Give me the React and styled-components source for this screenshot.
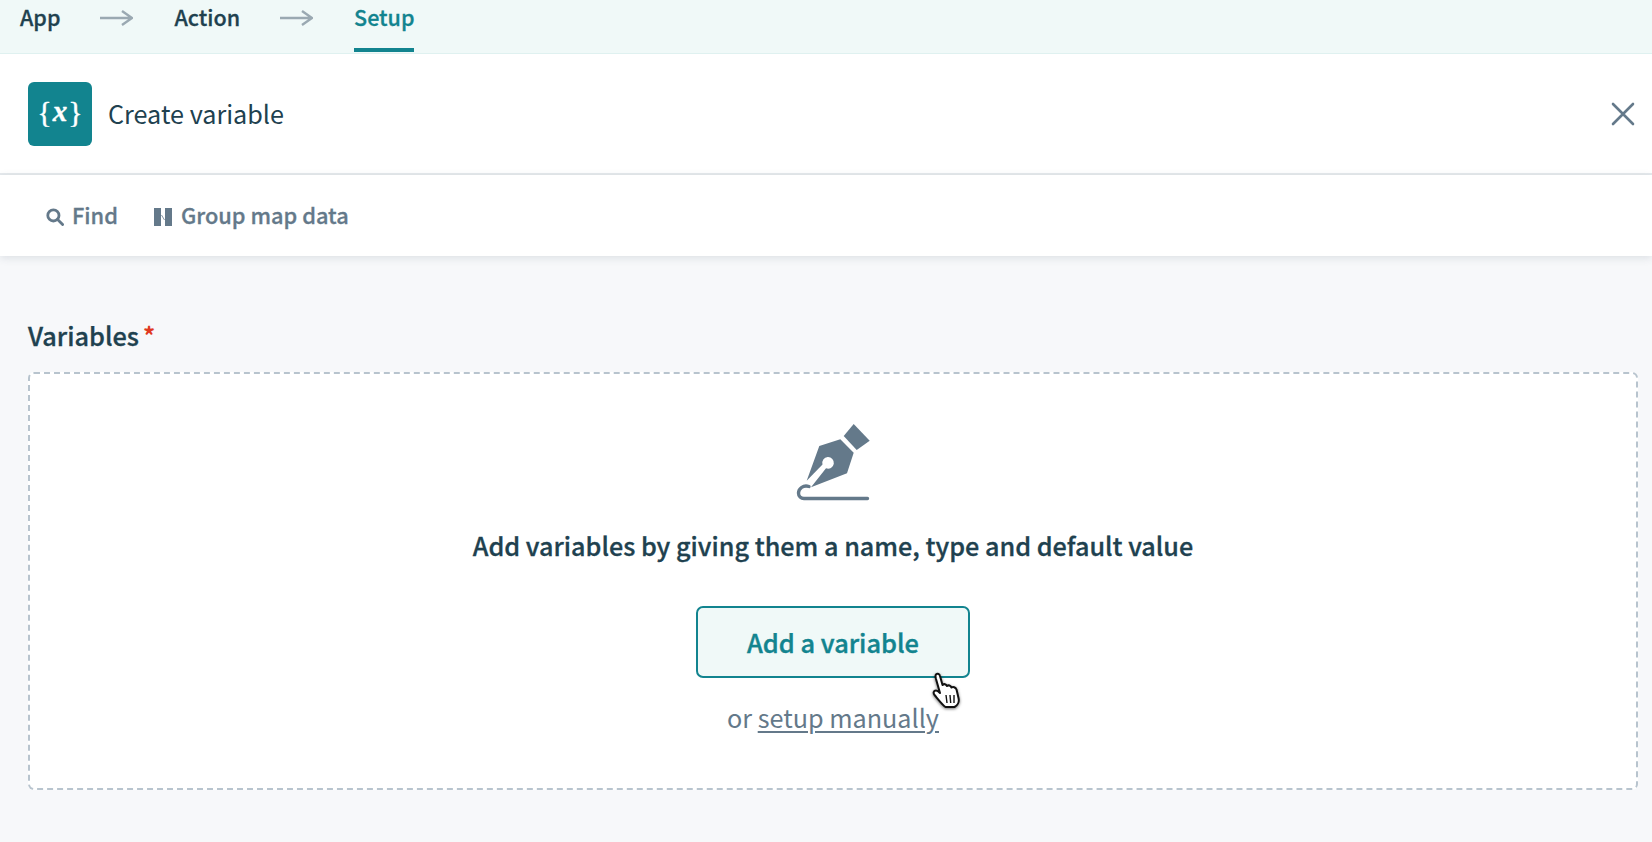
import React from "react";
import styled, { createGlobalStyle } from "styled-components";

const Global = createGlobalStyle`
  html, body { margin: 0; padding: 0; height: 842px; overflow: hidden; background: #f7f8fa; }
  body { font-family: "Noto Sans CJK SC", "Noto Sans", sans-serif; color: #20414f; }
  * { box-sizing: border-box; }
`;

const Page = styled.div`
  width: 1652px;
  height: 842px;
  display: flex;
  flex-direction: column;
  overflow: hidden;
`;

const StepBar = styled.nav`
  height: 54px;
  flex: none;
  background: #f0f9f8;
  border-bottom: 1px solid #dff1f0;
  display: flex;
  align-items: flex-start;
  padding-left: 20px;
`;

const Step = styled.div`
  height: 52px;
  font-size: 21.5px;
  line-height: 34px;
  font-weight: 500;
  -webkit-text-stroke: 0.3px currentColor;
  color: ${(p) => (p.$active ? "#12848f" : "#20414f")};
  border-bottom: 4px solid ${(p) => (p.$active ? "#12848f" : "transparent")};
`;

const StepArrow = styled.svg`
  width: 33px;
  height: 16px;
  margin: 10px 41px 0 40px;
  flex: none;
  fill: none;
  stroke: #9aa9b2;
  stroke-width: 2.4;
`;

const Header = styled.header`
  height: 121px;
  flex: none;
  background: #fff;
  border-bottom: 2px solid #e6eaed;
  display: flex;
  align-items: center;
  padding: 0 17px 0 28px;
`;

const AppIcon = styled.div`
  width: 64px;
  height: 64px;
  border-radius: 6px;
  background: #12848f;
  color: #fff;
  display: flex;
  align-items: center;
  justify-content: center;
  font-family: "Liberation Serif", serif;
  font-size: 30px;
  font-weight: 400;
  -webkit-text-stroke: 0.4px currentColor;
  line-height: 1;
  padding-bottom: 4px;
  flex: none;
`;

const VarX = styled.i`
  font-weight: 700;
  font-size: 29px;
  margin: 0 1px;
`;

const Title = styled.h1`
  margin: 0 0 2px 16px;
  font-size: 25.2px;
  line-height: 36px;
  font-weight: 400;
  flex: 1;
  color: #20414f;
`;

const CloseIcon = styled.svg`
  width: 24px;
  height: 24px;
  fill: none;
  stroke: #64798a;
  stroke-width: 2.6;
  stroke-linecap: round;
`;

const Toolbar = styled.div`
  height: 81px;
  flex: none;
  background: #fff;
  box-shadow: 0 2px 8px rgba(60, 80, 100, 0.14);
  display: flex;
  align-items: center;
  padding: 0 0 2px 46px;
  gap: 36px;
  position: relative;
`;

const ToolButton = styled.div`
  display: flex;
  align-items: center;
  gap: ${(p) => p.$gap}px;
  font-size: 21.8px;
  line-height: 30px;
  font-weight: 500;
  -webkit-text-stroke: 0.3px currentColor;
  color: #64798a;
`;

const ToolIcon = styled.svg`
  width: 18px;
  height: 18px;
  flex: none;
  margin-top: 4px;
`;

const Body = styled.main`
  flex: 1;
  background: #f7f8fa;
  padding: 61px 14px 0 28px;
`;

const FieldLabel = styled.div`
  font-size: 25.3px;
  line-height: 36px;
  font-weight: 500;
  -webkit-text-stroke: 0.3px currentColor;
  color: #20414f;
  margin-bottom: 19px;
`;

const Star = styled.span`
  color: #e0391f;
  font-size: 24px;
  font-weight: 700;
  margin-left: 4px;
  vertical-align: 1px;
  -webkit-text-stroke: 0;
`;

const DropBox = styled.section`
  height: 418px;
  background: #fff;
  border: 2px dashed #b8c4ce;
  border-radius: 6px;
  display: flex;
  flex-direction: column;
  align-items: center;
  padding-top: 46px;
`;

const Pen = styled.svg`
  width: 80px;
  height: 85px;
  flex: none;
`;

const Prompt = styled.div`
  margin-top: 22px;
  font-size: 25.2px;
  line-height: 36px;
  font-weight: 500;
  -webkit-text-stroke: 0.3px currentColor;
  color: #20414f;
`;

const AddButton = styled.div`
  position: relative;
  margin-top: 43px;
  width: 274px;
  height: 72px;
  border: 2px solid #12848f;
  border-radius: 7px;
  background: #f0f9f8;
  color: #12848f;
  display: flex;
  align-items: center;
  justify-content: center;
  font-size: 25.4px;
  font-weight: 500;
  -webkit-text-stroke: 0.4px currentColor;
`;

const Cursor = styled.svg`
  position: absolute;
  left: 231px;
  top: 64px;
  width: 34px;
  height: 38px;
  filter: drop-shadow(0 1px 1.5px rgba(0, 0, 0, 0.55));
`;

const Manual = styled.div`
  margin-top: 21px;
  font-size: 25.2px;
  line-height: 36px;
  color: #64798a;
`;

const ManualLink = styled.span`
  text-decoration: underline;
  text-underline-offset: 3px;
  text-decoration-thickness: 1.5px;
`;

const Arrow = () => (
  <StepArrow viewBox="0 0 33 16">
    <path d="M0 8H31.5M22 1L32 8L22 15" />
  </StepArrow>
);

export default function App() {
  return (
    <Page>
      <Global />
      <StepBar>
        <Step>App</Step>
        <Arrow />
        <Step>Action</Step>
        <Arrow />
        <Step $active>Setup</Step>
      </StepBar>
      <Header>
        <AppIcon>
          {"{"}
          <VarX>x</VarX>
          {"}"}
        </AppIcon>
        <Title>Create variable</Title>
        <CloseIcon viewBox="0 0 24 24">
          <path d="M2 2L22 22M22 2L2 22" />
        </CloseIcon>
      </Header>
      <Toolbar>
        <ToolButton $gap={8}>
          <ToolIcon viewBox="0 0 18 18" fill="none" stroke="#64798a" strokeWidth="2.8">
            <circle cx="7.4" cy="7.4" r="5.6" />
            <path d="M11.6 11.6L16.6 16.6" strokeLinecap="round" />
          </ToolIcon>
          Find
        </ToolButton>
        <ToolButton $gap={9}>
          <ToolIcon viewBox="0 0 18 18">
            <rect x="0" y="0" width="7" height="18" fill="#64798a" />
            <rect x="11" y="0" width="7" height="18" fill="#64798a" />
            <path d="M7.5 7L10.5 12" stroke="#64798a" strokeWidth="0.8" fill="none" />
          </ToolIcon>
          Group map data
        </ToolButton>
      </Toolbar>
      <Body>
        <FieldLabel>
          Variables<Star>*</Star>
        </FieldLabel>
        <DropBox>
          <Pen viewBox="32 10 80 85">
            <path fill="#64798a" d="M92.7 14L108.7 30.7L95.7 40L82.7 26Z" />
            <path
              fill="#64798a"
              fillRule="evenodd"
              d="M58.3 36L79.3 29.3L92.7 42.7L86 63.3L50 77.3L65 58.3A5.8 5.8 0 1 0 61.5 54.5L45.7 70.7Z"
            />
            <path
              d="M48 76.5C42 74.5 37.5 79 37.5 83C37.5 86.5 40 88.5 43 88.5H106.5"
              fill="none"
              stroke="#64798a"
              strokeWidth="3.4"
              strokeLinecap="round"
            />
          </Pen>
          <Prompt>Add variables by giving them a name, type and default value</Prompt>
          <AddButton>
            Add a variable
            <Cursor viewBox="0 0 34 38">
              <path
                d="M7 2.5C8.5 1 10.5 2 11 4L13.5 13C15 11.5 17 12 18 14C19.5 12.8 21.5 13.4 22.5 15.5C24 14.5 26.5 15 27.5 17.5L29.5 26C30.5 30 28.5 33.5 25.5 35H16.5C14 33.5 10.5 29 5.5 23C4 21 4.5 18.5 7 18.5C8.5 18.5 10 20 11 21L7 7C6.5 5 6 3.5 7 2.5Z"
                fill="#fff"
                stroke="#111"
                strokeWidth="2"
                strokeLinejoin="round"
              />
              <path d="M17 23L18 31M21 23L21.7 31M25 23L25 31" stroke="#111" strokeWidth="1.4" fill="none" />
            </Cursor>
          </AddButton>
          <Manual>
            or <ManualLink>setup manually</ManualLink>
          </Manual>
        </DropBox>
      </Body>
    </Page>
  );
}
